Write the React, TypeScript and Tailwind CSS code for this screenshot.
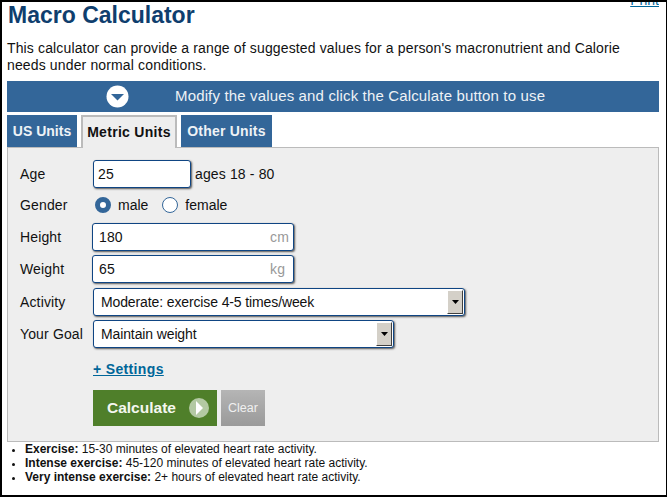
import React from "react";

const font = { fontFamily: '"Liberation Sans", Arial, sans-serif' };

function Caret() {
  return (
    <div className="mr-px flex h-[24px] w-[16px] items-center justify-center border border-t-white border-l-white border-r-[#404040] border-b-[#404040] bg-[#d4d0c8]">
      <svg width="7" height="4" viewBox="0 0 7 4"><path d="M0 0h7L3.5 4z" fill="#000" /></svg>
    </div>
  );
}

const box = "border border-[#0f4583] rounded-[3px] bg-white shadow-[1px_1px_2px_#555] box-border";

function Row({ label, children, className }: { label: string; children: React.ReactNode; className: string }) {
  return (
    <div className={"flex items-center " + className}>
      <div className="w-[73px] shrink-0 text-[14px] tracking-[0.14px] text-[#111]">{label}</div>
      {children}
    </div>
  );
}

function Unit({ value, unit }: { value: string; unit: string }) {
  return (
    <div className={box + " -ml-px flex h-[28px] w-[202px] items-center justify-between pl-[6px] pr-[3px] text-[14px] tracking-[0.14px]"}>
      <span className="text-[#111]">{value}</span>
      <span className="w-[20px] text-[#999]">{unit}</span>
    </div>
  );
}

function Sel({ value, w }: { value: string; w: string }) {
  return (
    <div className={box + " flex h-[28px] items-center justify-between pl-[7px] text-[14px] tracking-[-0.12px] text-[#111] " + w}>
      <span>{value}</span>
      <Caret />
    </div>
  );
}

export default function App() {
  return (
    <div style={font} className="box-border h-[497px] w-[667px] overflow-hidden border-t-2 border-b-2 border-l-2 border-r border-black bg-white pl-[5px] pr-[7px]">
      <div className="flex h-[27px] items-start justify-between overflow-hidden">
        <h1 className="pl-px text-[23px] font-bold leading-[27px] text-[#0f3e6e]">Macro Calculator</h1>
        <a className="-mt-[10px] h-[16px] text-[14px] leading-[17px] text-[#006699] underline">Print</a>
      </div>
      <p className="mt-[11px] text-[14px] leading-[17px] tracking-[0.14px] text-[#111]">
        This calculator can provide a range of suggested values for a person's macronutrient and Calorie<br />needs under normal conditions.
      </p>
      <div className="mt-[7px] flex h-[31px] items-center bg-[#336699] text-[15px] tracking-[0.15px] text-[#eef2f6]">
        <svg className="ml-[99px] mr-[46px]" width="23" height="23" viewBox="0 0 23 23">
          <circle cx="11.5" cy="11.5" r="11" fill="#fff" />
          <path d="M5 9h13l-6.5 6.5z" fill="#336699" />
        </svg>
        <span>Modify the values and click the Calculate button to use</span>
      </div>
      <div className="mt-[3px] flex h-[32px] gap-[4px] text-[14px] font-bold">
        <div className="flex w-[70px] items-center justify-center bg-[#336699] text-[#eef2f6]">US Units</div>
        <div className="relative z-10 flex h-[33px] w-[96px] items-center justify-center border-2 border-b-0 border-[#bbb] bg-[#eee] tracking-[0.3px] text-[#111]">Metric Units</div>
        <div className="flex w-[91px] items-center justify-center bg-[#336699] tracking-[0.2px] text-[#eef2f6]">Other Units</div>
      </div>
      <div className="box-border h-[295px] border border-[#bbb] bg-[#eee] pl-[12px] pt-[12px]">
        <Row label="Age" className="h-[28px]">
          <div className={box + " flex h-[28px] w-[98px] items-center pl-[4px] text-[14px] tracking-[0.14px] text-[#111]"}>25</div>
          <span className="ml-[4px] text-[14px] tracking-[0.14px] text-[#111]">ages 18 - 80</span>
        </Row>
        <Row label="Gender" className="mt-[3px] h-[28px]">
          <div className="ml-[2px] flex items-center text-[14px] text-[#111]">
            <span className="box-border h-[16px] w-[16px] rounded-full border-[5px] border-[#336699] bg-white" />
            <span className="ml-[7px]">male</span>
            <span className="ml-[14px] box-border h-[16px] w-[16px] rounded-full border border-[#336699] bg-white" />
            <span className="ml-[7px]">female</span>
          </div>
        </Row>
        <Row label="Height" className="mt-[4px] h-[28px]"><Unit value="180" unit="cm" /></Row>
        <Row label="Weight" className="mt-[4px] h-[28px]"><Unit value="65" unit="kg" /></Row>
        <Row label="Activity" className="mt-[5px] h-[28px]"><Sel value="Moderate: exercise 4-5 times/week" w="w-[372px]" /></Row>
        <Row label="Your Goal" className="mt-[4px] h-[28px]"><Sel value="Maintain weight" w="w-[301px]" /></Row>
        <div className="ml-[73px] mt-[13px] text-[14px] font-bold leading-[17px] tracking-[0.35px] text-[#006699] underline">+ Settings</div>
        <div className="ml-[73px] mt-[12px] flex gap-[4px]">
          <div className="flex h-[36px] w-[124px] items-center bg-[#4f7f2a] pl-[14px] text-[15.5px] font-bold text-[#f4f7f0]">
            <span>Calculate</span>
            <svg className="ml-[13px]" width="20" height="20" viewBox="0 0 20 20">
              <circle cx="10" cy="10" r="10" fill="#b3c9a3" />
              <path d="M7 3l7 7-7 7z" fill="#fff" />
            </svg>
          </div>
          <div className="flex h-[36px] w-[44px] items-center justify-center bg-gradient-to-b from-[#b5b5b5] to-[#9a9a9a] text-[12.5px] text-[#f0f0f0]">Clear</div>
        </div>
      </div>
      <ul className="list-disc pl-[18px] text-[12px] leading-[14px] text-[#111] marker:text-[11px]">
        <li><b>Exercise:</b> 15-30 minutes of elevated heart rate activity.</li>
        <li><b>Intense exercise:</b> 45-120 minutes of elevated heart rate activity.</li>
        <li><b>Very intense exercise:</b> 2+ hours of elevated heart rate activity.</li>
      </ul>
    </div>
  );
}
